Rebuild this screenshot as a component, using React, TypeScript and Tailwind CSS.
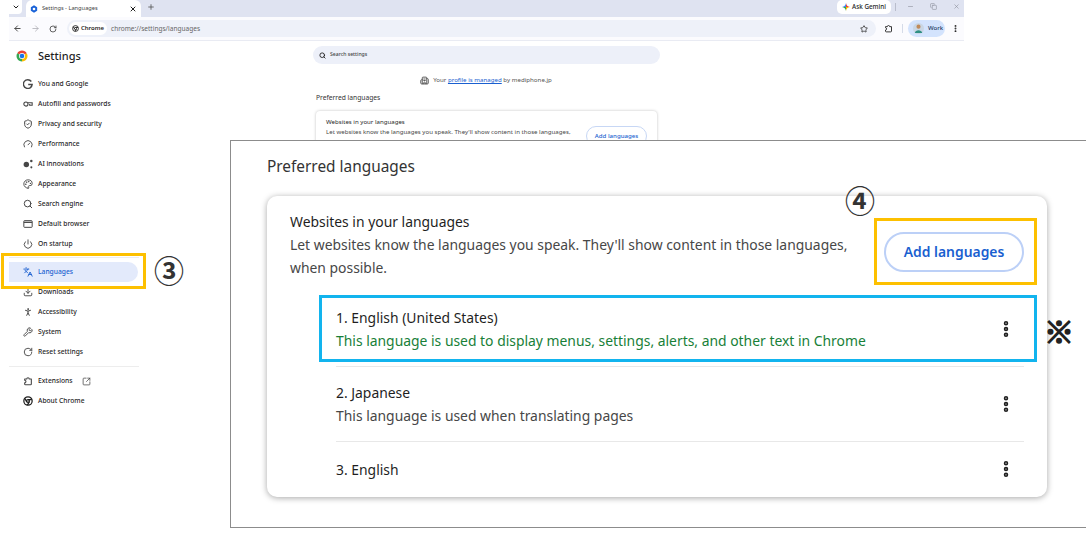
import type { ReactNode } from "react";
import {
  ArrowLeft,
  ArrowRight,
  ChevronDown,
  Copy,
  Download,
  Gauge,
  Languages,
  Minus,
  MoreVertical,
  Palette,
  PersonStanding,
  Plus,
  Power,
  RotateCw,
  Search,
  ShieldCheck,
  SquareArrowOutUpRight,
  Star,
  Building2,
  Wrench,
  X,
} from "lucide-react";

function ChromeLogo({ size = 12 }: { size?: number }) {
  return (
    <svg width={size} height={size} viewBox="0 0 24 24">
      <path d="M2.5 6.5A11 11 0 0 1 21.5 6.5L12 12Z" fill="#ea4335" />
      <path d="M21.5 6.5A11 11 0 0 1 12 23L12 12Z" fill="#fbbc04" />
      <path d="M12 23A11 11 0 0 1 2.5 6.5L12 12Z" fill="#34a853" />
      <circle cx="12" cy="12" r="6" fill="#fff" />
      <circle cx="12" cy="12" r="4.6" fill="#1a73e8" />
    </svg>
  );
}

function ChromeGlyph({ size = 9 }: { size?: number }) {
  return (
    <svg width={size} height={size} viewBox="0 0 24 24" fill="none" stroke="#1f1f1f" strokeWidth="3">
      <circle cx="12" cy="12" r="10" />
      <circle cx="12" cy="12" r="3.5" />
      <path d="M12 8.5h9M9 14 4.5 6M15 14l-4.5 8" />
    </svg>
  );
}

function GIcon() {
  return (
    <svg width="10" height="10" viewBox="0 0 24 24" fill="none" stroke="#474747" strokeWidth="3.4">
      <path d="M20 6A10.5 10.5 0 1 0 22 13H12.5" />
    </svg>
  );
}

function KeyIcon() {
  return (
    <svg width="10" height="10" viewBox="0 0 24 24" fill="none" stroke="#474747" strokeWidth="2.6">
      <circle cx="7" cy="12" r="5" />
      <path d="M12 9h10v6h-6v-3" />
    </svg>
  );
}

function SparkIcon() {
  return (
    <svg width="10" height="10" viewBox="0 0 24 24" fill="#474747">
      <circle cx="8" cy="13" r="6.5" />
      <circle cx="20" cy="5" r="3" />
      <circle cx="20" cy="20" r="2.5" />
    </svg>
  );
}

function WindowIcon() {
  return (
    <svg width="10" height="10" viewBox="0 0 24 24" fill="none" stroke="#474747" strokeWidth="2.4">
      <rect x="2" y="4" width="20" height="16" rx="1.5" />
      <path d="M2 8h20" strokeWidth="3" />
    </svg>
  );
}

function ExtensionIcon({ size = 10, color = "#474747" }: { size?: number; color?: string }) {
  return (
    <svg width={size} height={size} viewBox="0 0 24 24" fill="none" stroke={color} strokeWidth="2.6" strokeLinejoin="round">
      <path d="M4 7h5a3 3 0 0 1 6 0h5v12a2 2 0 0 1-2 2H6a2 2 0 0 1-2-2v-3a3 3 0 0 0 0-6Z" />
    </svg>
  );
}

function GeminiSpark() {
  return (
    <svg width="8" height="8" viewBox="0 0 24 24">
      <path d="M12 0C13 7 17 11 24 12L12 12Z" fill="#ea4335" />
      <path d="M24 12C17 13 13 17 12 24L12 12Z" fill="#fbbc04" />
      <path d="M12 0C11 7 7 11 0 12L12 12Z" fill="#4285f4" />
      <path d="M0 12C7 13 11 17 12 24L12 12Z" fill="#34a853" />
    </svg>
  );
}

function TabGear() {
  return (
    <svg width="8" height="8" viewBox="0 0 24 24">
      <path d="M12 1 21.5 6.5v11L12 23 2.500 17.500v-11Z" fill="#1a63d8" />
      <circle cx="12" cy="12" r="4" fill="#fff" />
    </svg>
  );
}

function Avatar() {
  return (
    <svg width="11" height="11" viewBox="0 0 24 24">
      <circle cx="12" cy="12" r="12" fill="#c9d6e4" />
      <circle cx="12" cy="8" r="4.5" fill="#c08a5a" />
      <path d="M4 22c1-8 15-8 16 0Z" fill="#2f8f83" />
    </svg>
  );
}

type NavItem = { icon: ReactNode; label: string };

const ic = "w-[10px] h-[10px] text-[#474747]";

const navTop: NavItem[] = [
  { icon: <GIcon />, label: "You and Google" },
  { icon: <KeyIcon />, label: "Autofill and passwords" },
  { icon: <ShieldCheck className={ic} strokeWidth={2.4} />, label: "Privacy and security" },
  { icon: <Gauge className={ic} strokeWidth={2.2} />, label: "Performance" },
  { icon: <SparkIcon />, label: "AI innovations" },
  { icon: <Palette className={ic} strokeWidth={2.2} />, label: "Appearance" },
  { icon: <Search className={ic} strokeWidth={2.4} />, label: "Search engine" },
  { icon: <WindowIcon />, label: "Default browser" },
  { icon: <Power className={ic} strokeWidth={2.2} />, label: "On startup" },
];

const navBottom: NavItem[] = [
  { icon: <Download className={ic} strokeWidth={2.2} />, label: "Downloads" },
  { icon: <PersonStanding className={ic} strokeWidth={2.4} />, label: "Accessibility" },
  { icon: <Wrench className={ic} strokeWidth={2.2} />, label: "System" },
  { icon: <RotateCw className={ic} strokeWidth={2.2} />, label: "Reset settings" },
];

function NavRow({ item }: { item: NavItem }) {
  return (
    <div className="h-5 flex items-center">
      <div className="w-[29px] pl-[8px] flex items-center justify-center">{item.icon}</div>
      <span className="text-[6.7px] font-medium text-[#1f1f1f] leading-none whitespace-nowrap">{item.label}</span>
    </div>
  );
}

function LangRow({ title, sub, green, last }: { title: string; sub?: string; green?: boolean; last?: boolean }) {
  return (
    <div className={`flex items-center justify-between ${sub ? "h-[75px]" : "h-[54px]"} ${last ? "" : "border-b border-[#e8e8e8]"}`}>
      <div>
        <div className="text-[13.9px] leading-[23px] text-[#1f1f1f]">{title}</div>
        {sub && <div className={`text-[13.9px] leading-[23px] ${green ? "text-[#188038]" : "text-[#474747]"}`}>{sub}</div>}
      </div>
      <MoreVertical className="w-5 h-5 text-[#1f1f1f] mr-[8px]" strokeWidth={3.4} />
    </div>
  );
}

export default function App() {
  return (
    <div className="relative w-[1086px] h-[537px] overflow-hidden bg-white font-['Noto_Sans',sans-serif]">
      <div className="w-[955px] ml-[9px]">
        {/* tab strip */}
        <div className="h-[17px] bg-[#dfe3f1] flex items-start">
          <div className="w-[13px] h-[14px] bg-white rounded-br-[4px] flex items-center justify-center">
            <ChevronDown className="w-[8px] h-[8px] text-[#1f1f1f]" strokeWidth={3} />
          </div>
          <div className="ml-[4px] w-[115px] h-[17px] bg-white rounded-t-[6px] flex items-center pl-[4px] pr-[4px]">
            <TabGear />
            <span className="ml-[4px] text-[5.7px] text-[#444] whitespace-nowrap">Settings - Languages</span>
            <X className="ml-auto w-[8px] h-[8px] text-[#1f1f1f]" strokeWidth={3} />
          </div>
          <Plus className="ml-[6px] mt-[3px] w-[8px] h-[8px] text-[#555]" strokeWidth={2.5} />
          <div className="ml-auto w-[54px] h-[14px] bg-white rounded-[5px] flex items-center justify-center gap-[2px]">
            <GeminiSpark />
            <span className="text-[6.3px] font-medium text-[#1f1f1f] whitespace-nowrap">Ask Gemini</span>
          </div>
          <div className="ml-[4px] mt-[3px] w-px h-[8px] bg-[#b9bdcc]" />
          <Minus className="ml-[11px] mt-[3px] w-[7px] h-[7px] text-[#8a8d99]" />
          <Copy className="ml-[16px] mt-[3px] w-[7px] h-[7px] text-[#8a8d99]" />
          <X className="ml-[16px] mr-[4px] mt-[3px] w-[7px] h-[7px] text-[#8a8d99]" />
        </div>

        {/* toolbar */}
        <div className="h-[24px] bg-[#fbfbfe] border-b border-[#e9ebf3] flex items-center">
          <ArrowLeft className="ml-[4px] w-[9px] h-[9px] text-[#444]" strokeWidth={2.5} />
          <ArrowRight className="ml-[9px] w-[9px] h-[9px] text-[#a9a9b0]" strokeWidth={2} />
          <RotateCw className="ml-[9px] w-[8px] h-[8px] text-[#444]" strokeWidth={2.5} />
          <div className="ml-[10px] w-[809px] h-[17px] rounded-full bg-[#eef1f9] flex items-center pl-[2px] pr-[8px]">
            <div className="h-[13px] w-[38px] rounded-full bg-white flex items-center justify-center gap-[2px]">
              <ChromeGlyph size={7} />
              <span className="text-[6px] font-semibold text-[#1f1f1f]">Chrome</span>
            </div>
            <span className="ml-[4px] text-[6.55px] text-[#666]">chrome://settings/languages</span>
            <Star className="ml-auto w-[8px] h-[8px] text-[#333]" strokeWidth={2.5} />
          </div>
          <div className="ml-[8px]">
            <ExtensionIcon size={9} color="#333" />
          </div>
          <div className="ml-[9px] w-px h-[9px] bg-[#d5dbe8]" />
          <div className="ml-[5px] w-[37px] h-[17px] rounded-full bg-[#d3e3fd] flex items-center pl-[5px] gap-[4px]">
            <Avatar />
            <span className="text-[6px] font-medium text-[#1f3b63]">Work</span>
          </div>
          <MoreVertical className="ml-[6px] w-[9px] h-[9px] text-[#222]" strokeWidth={3} />
        </div>

        {/* settings page */}
        <div className="flex">
          <div className="w-[304px] shrink-0">
            <div className="h-[30px] flex items-center pl-[7px] gap-[10px]">
              <ChromeLogo size={12} />
              <span className="text-[11px] font-medium text-[#1f1f1f]">Settings</span>
            </div>
            <div className="pt-[3px]">
              {navTop.map((item) => (
                <NavRow key={item.label} item={item} />
              ))}
            </div>
            <div className="w-[130px] h-px bg-[#ededed] mt-[3px]" />
            <div className="w-[129px] h-[20px] mt-[4px] mb-[-1px] bg-[#e3eafb] rounded-r-full flex items-center">
              <div className="w-[29px] pl-[8px] flex items-center justify-center">
                <Languages className="w-[10px] h-[10px] text-[#1a5fd0]" strokeWidth={2.2} />
              </div>
              <span className="text-[6.7px] font-medium text-[#1a5fd0] leading-none">Languages</span>
            </div>
            <div className="pt-[1px]">
              {navBottom.map((item) => (
                <NavRow key={item.label} item={item} />
              ))}
            </div>
            <div className="w-[130px] h-px bg-[#ededed] mt-[4px] mb-[4px]" />
            <div className="h-5 flex items-center">
              <div className="w-[29px] pl-[8px] flex items-center justify-center">
                <ExtensionIcon />
              </div>
              <span className="text-[6.7px] font-medium text-[#1f1f1f] leading-none">Extensions</span>
              <SquareArrowOutUpRight className="ml-[9px] w-[9px] h-[9px] text-[#474747]" strokeWidth={2} />
            </div>
            <div className="h-5 flex items-center">
              <div className="w-[29px] pl-[8px] flex items-center justify-center">
                <ChromeGlyph size={10} />
              </div>
              <span className="text-[6.7px] font-medium text-[#1f1f1f] leading-none">About Chrome</span>
            </div>
          </div>

          <div className="w-[347px] shrink-0 pt-[5px]">
            <div className="h-[18px] rounded-full bg-[#edf0f9] flex items-center pl-[6px] gap-[4px]">
              <Search className="w-[7px] h-[7px] text-[#1f1f1f]" strokeWidth={3} />
              <span className="text-[5.1px] font-medium text-[#444]">Search settings</span>
            </div>
            <div className="h-[16px] mt-[8px] flex items-center justify-center gap-[4px] pr-[1px]">
              <Building2 className="w-[9px] h-[9px] text-[#555]" strokeWidth={2.5} />
              <span className="text-[6.15px] text-[#555] whitespace-nowrap">
                Your <span className="text-[#1a5fd0] underline">profile is managed</span> by mediphone.jp
              </span>
            </div>
            <div className="mt-[4px] ml-[3px] text-[6.7px] leading-[12px] text-[#333]">Preferred languages</div>
            <div className="mt-[7px] ml-[3px] w-[341px] h-[60px] bg-white rounded-[4px] shadow-[0_0_3px_rgba(0,0,0,0.25)] pt-[6px] pl-[10px] flex">
              <div>
                <div className="text-[6.1px] leading-[10px] text-[#1f1f1f]">Websites in your languages</div>
                <div className="w-[252px] text-[6.1px] leading-[10px] text-[#474747]">
                  Let websites know the languages you speak. They'll show content in those languages, when possible.
                </div>
              </div>
              <div className="ml-[8px] mt-[9px] w-[61px] h-[20px] rounded-full border border-[#c7d7f5] flex items-center justify-center text-[6.1px] font-medium text-[#1a5fd0]">
                Add languages
              </div>
            </div>
          </div>
        </div>
      </div>

      {/* zoomed panel laid over the page */}
      <div className="absolute left-[230px] top-[140px] w-[856px] h-[388px] bg-white border border-[#8c8c8c] border-r-0">
        <div className="pl-[36px] pt-[13px] text-[15.4px] leading-[26px] text-[#333]">Preferred languages</div>
        <div className="ml-[36px] mt-[16px] w-[780px] h-[301px] bg-white rounded-[10px] shadow-[0_1px_6px_rgba(0,0,0,0.35)] pl-[23px] pr-[23px] pt-[14px]">
          <div className="flex">
            <div className="w-[594px]">
              <div className="text-[13.9px] leading-[23px] text-[#1f1f1f]">Websites in your languages</div>
              <div className="text-[13.9px] leading-[23px] text-[#474747]">
                Let websites know the languages you speak. They'll show content in those languages, when possible.
              </div>
            </div>
            <div className="w-[140px] h-[40px] mt-[22px] ml-auto rounded-full border-2 border-[#bcd0f7] flex items-center justify-center text-[13.9px] font-semibold text-[#1a5fd0]">
              Add languages
            </div>
          </div>
          <div className="ml-[46px] mt-[13px]">
            <LangRow
              title="1. English (United States)"
              sub="This language is used to display menus, settings, alerts, and other text in Chrome"
              green
            />
            <LangRow title="2. Japanese" sub="This language is used when translating pages" />
            <LangRow title="3. English" last />
          </div>
        </div>
      </div>

      {/* annotations */}
      <div className="absolute left-[1px] top-[253px] w-[145px] h-[36px] border-[3px] border-[#fdc000]" />
      <div className="absolute left-[874px] top-[218px] w-[163px] h-[67px] border-[3px] border-[#fdc000]" />
      <div className="absolute left-[319px] top-[295px] w-[718px] h-[67px] border-[3px] border-[#12b4ee]" />
      <span className="absolute left-[154px] top-[250px] text-[30px] leading-[38px] font-bold text-[#333] font-['Noto_Sans_CJK_JP',sans-serif]">③</span>
      <span className="absolute left-[845px] top-[180px] text-[30px] leading-[38px] font-bold text-[#333] font-['Noto_Sans_CJK_JP',sans-serif]">④</span>
      <span className="absolute left-[1044px] top-[311px] text-[30px] leading-[38px] font-black text-[#222] [-webkit-text-stroke:1.5px_#222] font-['Noto_Sans_CJK_JP',sans-serif]">※</span>
    </div>
  );
}
